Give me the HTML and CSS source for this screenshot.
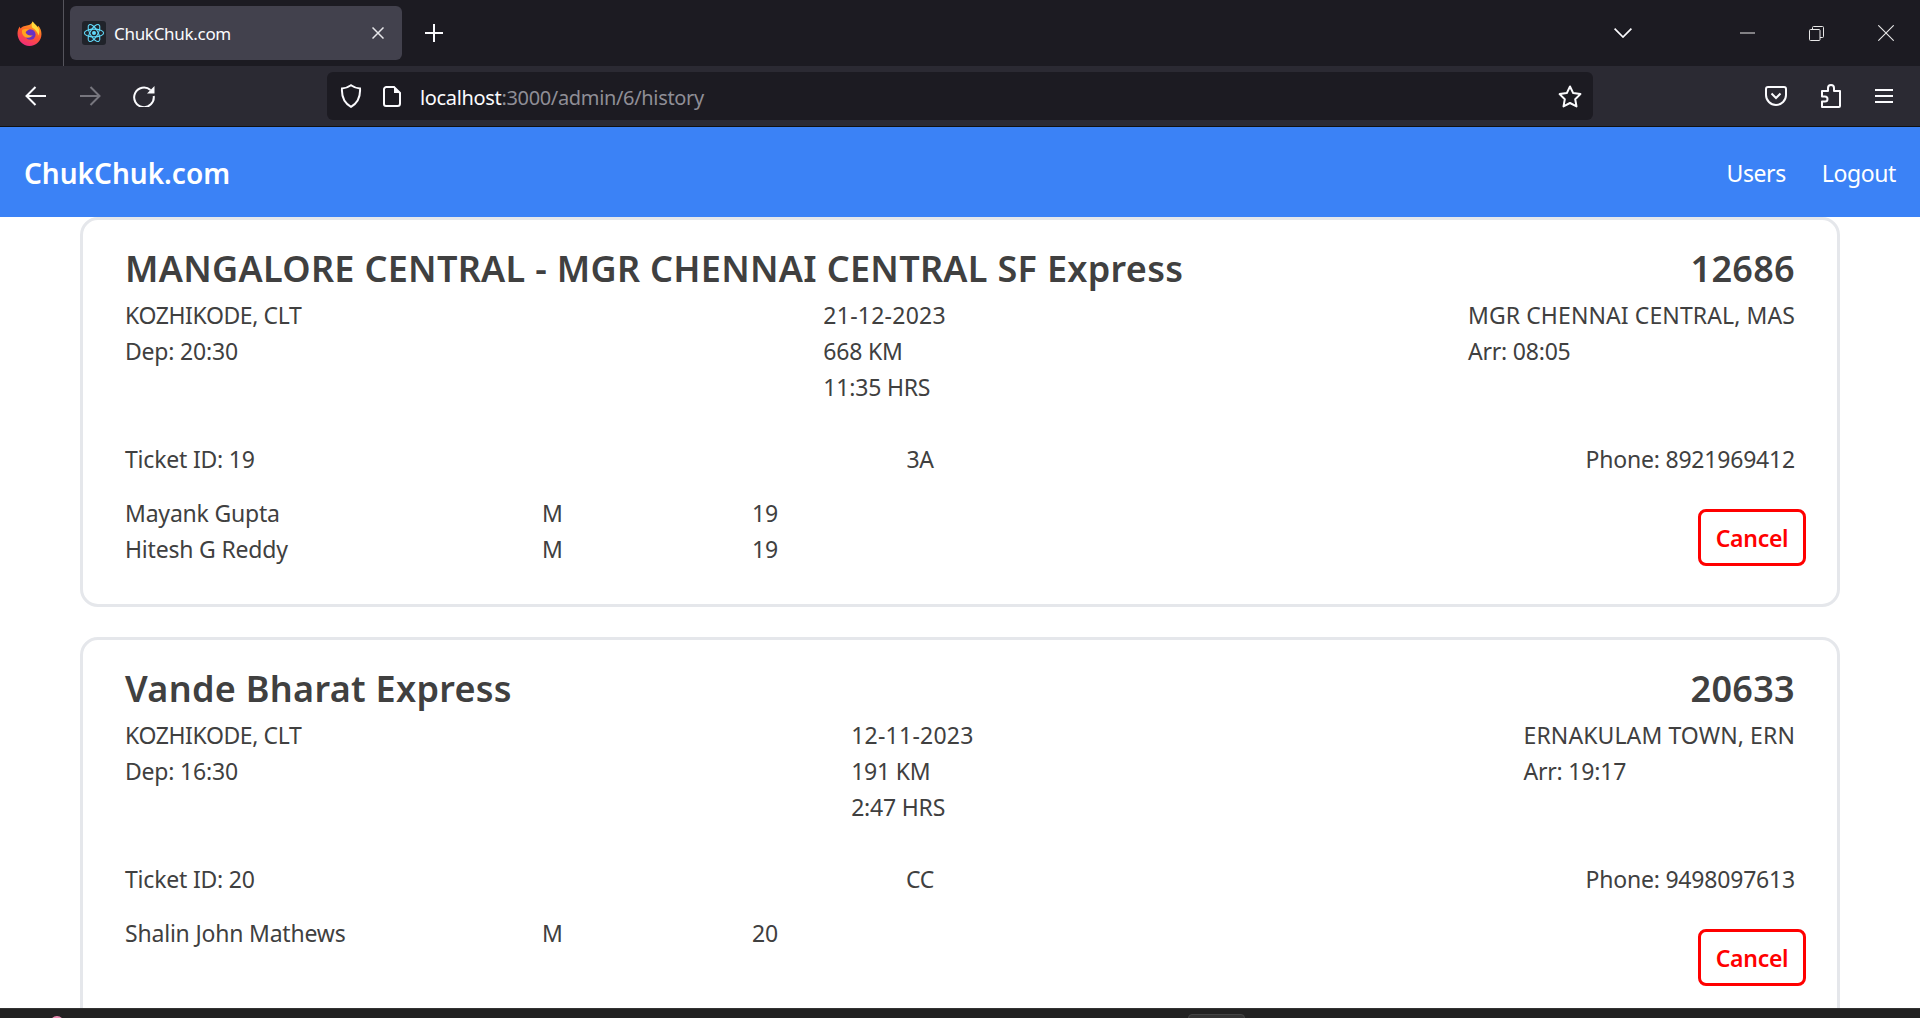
FILE: index.html
```html
<!DOCTYPE html>
<html>
<head>
    <title>ChukChuk.com</title>
    <link rel="stylesheet" href="styles.css">
</head>
<body>
    <div class="tab-strip">
        <div class="ff-logo">
            <svg width="25" height="25" viewBox="0 0 24 24">
                <defs>
                    <linearGradient id="ffBody" x1="0.7" y1="0" x2="0.3" y2="1">
                        <stop offset="0" stop-color="#ffb120"/>
                        <stop offset="0.5" stop-color="#ff5a2c"/>
                        <stop offset="1" stop-color="#f0287f"/>
                    </linearGradient>
                </defs>
                <path d="M15 0.5c1 2.200 3.400 3.300 4.800 5.200 0.300-0.500 0.500-0.900 0.600-1.200 2 2.200 3.100 5 3.100 8 0 6.400-5.100 11.500-11.500 11.500S0.500 18.400 0.500 12c0-2.500 0.800-4.900 2.200-6.800 0 0.900 0.300 1.500 0.700 2 1.200-1.500 2.700-2.300 4.300-2.500C10 4.500 13.400 4 15 0.500z" fill="url(#ffBody)"/>
                <path d="M15 0.500c1.500 2.500 4.500 4 6 7.500 0.600 1.500 0.500 4-0.500 6-0.500-3.500-3-6-5.800-7.500C13.800 4.500 14 2.500 15 0.500z" fill="#ffd93b"/>
                <circle cx="12.800" cy="13" r="5" fill="#6a32c4"/>
                <path d="M5 8.500c2-1.200 5-1.200 7 0 -2 0.300-3.300 1.200-3.800 2.600 1.500 2.800 4.500 3.500 7 2.400 -1.500 2.600-5.500 3.400-8.300 1.400C5 13.400 4.300 10.800 5 8.500z" fill="#ffa51f"/>
            </svg>
        </div>
        <div class="tab">
            <span class="favicon">
                <svg width="22" height="22" viewBox="-12 -12 24 24" fill="none" stroke="#61dafb" stroke-width="1.200">
                    <circle r="2.200" fill="#61dafb" stroke="none"/>
                    <ellipse rx="10.500" ry="4.200"/>
                    <ellipse rx="10.500" ry="4.200" transform="rotate(60)"/>
                    <ellipse rx="10.500" ry="4.200" transform="rotate(120)"/>
                </svg>
            </span>
            <span class="tab-title">ChukChuk.com</span>
            <svg class="tab-close" width="12" height="12" viewBox="0 0 12 12" stroke="#e6e6ea" stroke-width="1.500">
                <path d="M0.500 0.500l11 11M11.500 0.500l-11 11"/>
            </svg>
        </div>
        <svg class="new-tab" width="18" height="18" viewBox="0 0 18 18" stroke="#fbfbfe" stroke-width="2">
            <path d="M9 0v18M0 9h18"/>
        </svg>
        <div class="strip-right">
            <svg class="tab-list" width="18" height="10" viewBox="0 0 18 10" fill="none" stroke="#fbfbfe" stroke-width="1.700">
                <path d="M0.600 0.600L9 9l8.400-8.400"/>
            </svg>
            <div class="win-btn">
                <svg width="15" height="2" viewBox="0 0 15 2" stroke="#e8e8e8" stroke-width="1"><path d="M0 1h15"/></svg>
            </div>
            <div class="win-btn">
                <svg width="15" height="15" viewBox="0 0 15 15" fill="none" stroke="#e8e8e8" stroke-width="1">
                    <rect x="0.500" y="3.500" width="10.500" height="11" rx="1"/>
                    <path d="M3.500 3.500V1.500a1 1 0 0 1 1-1h9a1 1 0 0 1 1 1v9a1 1 0 0 1-1 1h-2.500"/>
                </svg>
            </div>
            <div class="win-btn">
                <svg width="16" height="16" viewBox="0 0 16 16" stroke="#e8e8e8" stroke-width="1.100"><path d="M0.300 0.300l15.400 15.400M15.700 0.300L0.300 15.700"/></svg>
            </div>
        </div>
    </div>

    <div class="toolbar">
        <svg class="tool-back" width="22" height="20" viewBox="0 0 22 20" fill="none" stroke="#fbfbfe" stroke-width="2">
            <path d="M21 10H2M10.500 1L1.500 10l9 9"/>
        </svg>
        <svg class="tool-fwd" width="22" height="20" viewBox="0 0 22 20" fill="none" stroke="#77767e" stroke-width="2">
            <path d="M1 10h19M11.500 1l9 9-9 9"/>
        </svg>
        <svg class="tool-reload" width="22" height="22" viewBox="0 0 22 22" fill="none" stroke="#fbfbfe" stroke-width="2">
            <path d="M17.500 5A9.800 9.800 0 1 0 20.700 11"/>
            <path d="M21.500 1v7.500H14z" fill="#fbfbfe" stroke="none"/>
        </svg>
        <div class="url-bar">
            <svg width="22" height="24" viewBox="0 0 22 24" fill="none" stroke="#fbfbfe" stroke-width="2">
                <path d="M11 1.200c2.500 1.800 5.800 3 9 3.300 0.500 7.500-2.500 14.500-9 18.300C4.500 19 1.500 12 2 4.500c3.200-0.300 6.500-1.500 9-3.300z"/>
            </svg>
            <svg class="page-icon" width="18" height="21" viewBox="0 0 18 21" fill="none" stroke="#fbfbfe" stroke-width="2">
                <path d="M3 1h8l6 6v10.500a2.500 2.500 0 0 1-2.500 2.500h-11.500a2 2 0 0 1-2-2v-15a2.500 2.500 0 0 1 2-2z"/>
                <path d="M11 1l6 6h-6z" fill="#fbfbfe" stroke="none"/>
            </svg>
            <span class="url-text"><span class="url-host">localhost</span>:3000/admin/6/history</span>
            <svg class="star" width="24" height="23" viewBox="0 0 24 23" fill="none" stroke="#fbfbfe" stroke-width="2" stroke-linejoin="round">
                <path d="M12 1.500l3.200 6.600 7.200 1-5.200 5.100 1.300 7.200-6.500-3.400-6.500 3.400 1.300-7.200L1.600 9.100l7.200-1z"/>
            </svg>
        </div>
        <div class="tool-right">
            <svg width="22" height="20" viewBox="0 0 22 20" fill="none" stroke="#fbfbfe" stroke-width="2">
                <path d="M3 1h16a2 2 0 0 1 2 2v6a10 10 0 0 1-20 0V3a2 2 0 0 1 2-2z"/>
                <path d="M6.500 7.500L11 12l4.500-4.500"/>
            </svg>
            <svg width="20" height="24" viewBox="0 0 20 24" fill="none" stroke="#fbfbfe" stroke-width="2" stroke-linejoin="round">
                <path d="M1 23v-5.500h3a2 2 0 0 0 0-5H1V7h6V4a3 3 0 0 1 6 0v3h6v15a1 1 0 0 1-1 1z"/>
            </svg>
            <svg width="18" height="16" viewBox="0 0 18 16" stroke="#fbfbfe" stroke-width="2">
                <path d="M0 2h18M0 8h18M0 14h18"/>
            </svg>
        </div>
    </div>

    <nav class="navbar">
        <a class="brand">ChukChuk.com</a>
        <div class="nav-links">
            <a>Users</a>
            <a>Logout</a>
        </div>
    </nav>

    <div class="page">
        <div class="card">
            <div class="card-head">
                <span>MANGALORE CENTRAL - MGR CHENNAI CENTRAL SF Express</span>
                <span>12686</span>
            </div>
            <div class="route">
                <div>
                    <div class="station-from">KOZHIKODE, CLT</div>
                    <div>Dep: 20:30</div>
                </div>
                <div>
                    <div class="trip-date">21-12-2023</div>
                    <div>668 KM</div>
                    <div>11:35 HRS</div>
                </div>
                <div>
                    <div class="station-to">MGR CHENNAI CENTRAL, MAS</div>
                    <div>Arr: 08:05</div>
                </div>
            </div>
            <div class="ticket">
                <span>Ticket ID: 19</span>
                <span>3A</span>
                <span>Phone: 8921969412</span>
            </div>
            <div class="passengers">
                <div class="passenger-list">
                    <span>Mayank Gupta</span><span>M</span><span>19</span>
                    <span>Hitesh G Reddy</span><span>M</span><span>19</span>
                </div>
                <button class="cancel-btn">Cancel</button>
            </div>
        </div>

        <div class="card">
            <div class="card-head">
                <span>Vande Bharat Express</span>
                <span>20633</span>
            </div>
            <div class="route">
                <div>
                    <div class="station-from">KOZHIKODE, CLT</div>
                    <div>Dep: 16:30</div>
                </div>
                <div>
                    <div class="trip-date">12-11-2023</div>
                    <div>191 KM</div>
                    <div>2:47 HRS</div>
                </div>
                <div>
                    <div class="station-to">ERNAKULAM TOWN, ERN</div>
                    <div>Arr: 19:17</div>
                </div>
            </div>
            <div class="ticket">
                <span>Ticket ID: 20</span>
                <span>CC</span>
                <span>Phone: 9498097613</span>
            </div>
            <div class="passengers">
                <div class="passenger-list">
                    <span>Shalin John Mathews</span><span>M</span><span>20</span>
                </div>
                <button class="cancel-btn">Cancel</button>
            </div>
        </div>
    </div>

    <div class="taskbar">
        <span class="task-dot"></span>
        <span class="task-thumb"></span>
    </div>
</body>
</html>
```

FILE: styles.css
```css
* {
    box-sizing: border-box;
}
html, body {
    height: 100%;
}
body {
    margin: 0;
    display: flex;
    flex-direction: column;
    overflow: hidden;
    background: #fff;
    font-family: "Noto Sans", "Open Sans", sans-serif;
}

/* browser chrome */
.tab-strip {
    height: 66px;
    flex: none;
    display: flex;
    align-items: center;
    background: #1c1b22;
}
.ff-logo {
    width: 64px;
    height: 66px;
    padding-right: 4px;
    flex: none;
    display: flex;
    align-items: center;
    justify-content: center;
    border-right: 1px solid #55545c;
}
.tab {
    width: 332px;
    height: 54px;
    margin-left: 6px;
    padding: 0 18px 0 12px;
    display: flex;
    align-items: center;
    background: #42414d;
    border-radius: 6px;
    color: #fbfbfe;
}
.favicon {
    width: 24px;
    height: 24px;
    display: flex;
    align-items: center;
    justify-content: center;
    background: #20232a;
    border-radius: 3px;
}
.tab-title {
    flex: 1;
    margin-left: 8px;
    font-size: 17px;
    letter-spacing: -0.300px;
}
.new-tab {
    margin-left: 23px;
}
.strip-right {
    margin-left: auto;
    display: flex;
    align-items: center;
}
.tab-list {
    margin-right: 81px;
}
.win-btn {
    width: 69px;
    display: flex;
    justify-content: center;
}
.toolbar {
    height: 60px;
    flex: none;
    display: flex;
    align-items: center;
    background: #2b2a33;
}
.tool-back {
    margin-left: 25px;
}
.tool-fwd {
    margin-left: 32px;
}
.tool-reload {
    margin-left: 32px;
}
.url-bar {
    width: 1266px;
    height: 48px;
    margin-left: 172px;
    padding: 0 11px 0 13px;
    display: flex;
    align-items: center;
    background: #1c1b22;
    border-radius: 6px;
}
.page-icon {
    margin-left: 21px;
}
.url-text {
    flex: 1;
    margin: 2px 0 0 19px;
    font-size: 20px;
    letter-spacing: -0.340px;
    color: #8f8e96;
}
.url-host {
    color: #fbfbfe;
}
.tool-right {
    flex: 1;
    padding: 0 27px 0 0;
    display: flex;
    align-items: center;
    justify-content: flex-end;
    gap: 34px;
}

/* app */
.navbar {
    height: 91px;
    flex: none;
    padding: 2px 24px 0;
    display: flex;
    align-items: center;
    justify-content: space-between;
    background: #3b82f6;
    border-top: 1px solid #111;
    color: #fff;
}
.brand {
    font-size: 28px;
    font-weight: 600;
}
.nav-links {
    display: flex;
    gap: 36px;
    font-size: 23px;
    letter-spacing: -0.400px;
}
.page {
    flex: 1;
    min-height: 0;
    overflow: hidden;
    padding: 0 80px;
}
.card {
    margin-bottom: 30px;
    padding: 22px 42px 37px;
    border: 3px solid #e5e7eb;
    border-radius: 18px;
    color: #404040;
    font-size: 23px;
    line-height: 36px;
    letter-spacing: -0.200px;
}
.card-head {
    display: flex;
    justify-content: space-between;
    margin-bottom: 1px;
    font-size: 36px;
    line-height: 54px;
    font-weight: 600;
    letter-spacing: 0.300px;
}
.route, .ticket {
    display: flex;
    justify-content: space-between;
}
.station-from {
    letter-spacing: -0.400px;
}
.station-to {
    letter-spacing: 0.100px;
}
.trip-date {
    letter-spacing: 0.250px;
}
.ticket {
    margin-top: 36px;
}
.passengers {
    margin-top: 18px;
    display: flex;
    align-items: flex-start;
    justify-content: space-between;
}
.passenger-list {
    display: grid;
    grid-template-columns: 417px 210px auto;
}
.cancel-btn {
    width: 108px;
    height: 57px;
    margin: 14px -11px 0 0;
    padding: 0;
    background: #fff;
    border: 3px solid #f00;
    border-radius: 8px;
    color: #f00;
    font-family: inherit;
    font-size: 23px;
    font-weight: 600;
    letter-spacing: -0.300px;
}
.taskbar {
    height: 10px;
    flex: none;
    display: flex;
    align-items: flex-start;
    overflow: hidden;
    background: #222;
    border-top: 1px solid #333;
}
.task-dot {
    width: 14px;
    height: 14px;
    margin: 7px 0 0 50px;
    background: #e88ab0;
    border-radius: 50%;
}
.task-thumb {
    width: 57px;
    height: 10px;
    margin: 5px 0 0 1124px;
    background: #333;
    border: 1px solid #444;
    border-radius: 4px;
}
```
